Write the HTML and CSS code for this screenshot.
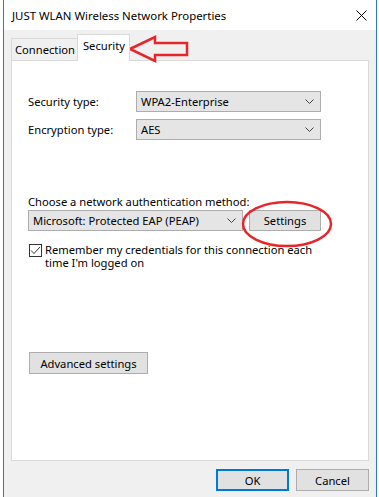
FILE: index.html
```html
<!DOCTYPE html>
<html lang="en">
<head>
  <meta charset="UTF-8">
  <title>JUST WLAN Wireless Network Properties</title>
  <link rel="stylesheet" href="styles.css">
</head>
<body>
  <div class="window">
    <div class="titlebar">
      <span class="title">JUST WLAN Wireless Network Properties</span>
      <svg class="close" width="11" height="11" viewBox="0 0 11 11"><path d="M0.5 0.5 L10.5 10.5 M10.5 0.5 L0.5 10.5" stroke="#000" stroke-width="1"/></svg>
    </div>
    <div class="content">
      <div class="tabs">
        <div class="tab">Connection</div>
        <div class="tab selected">Security</div>
      </div>
      <div class="panel">
        <div class="field">
          <span class="label">Security type:</span>
          <div class="combo wide"><span>WPA2-Enterprise</span><svg class="chev" width="9" height="5" viewBox="0 0 9 5"><path d="M0.5 0.5 L4.5 4.5 L8.5 0.5" fill="none" stroke="#444"/></svg></div>
        </div>
        <div class="field">
          <span class="label">Encryption type:</span>
          <div class="combo wide"><span>AES</span><svg class="chev" width="9" height="5" viewBox="0 0 9 5"><path d="M0.5 0.5 L4.5 4.5 L8.5 0.5" fill="none" stroke="#444"/></svg></div>
        </div>
        <p class="heading">Choose a network authentication method:</p>
        <div class="auth">
          <div class="combo method"><span>Microsoft: Protected EAP (PEAP)</span><svg class="chev" width="9" height="5" viewBox="0 0 9 5"><path d="M0.5 0.5 L4.5 4.5 L8.5 0.5" fill="none" stroke="#444"/></svg></div>
          <button class="btn settings">Settings</button>
        </div>
        <label class="check">
          <span class="box"><svg width="11" height="11" viewBox="0 0 11 11"><path d="M1 5.5 L4 8.5 L10 2" fill="none" stroke="#333" stroke-width="1"/></svg></span>
          <span class="check-text">Remember my credentials for this connection each time I'm logged on</span>
        </label>
        <button class="btn advanced">Advanced settings</button>
      </div>
      <div class="footer">
        <button class="btn default">OK</button>
        <button class="btn">Cancel</button>
      </div>
    </div>
    <!-- red annotations drawn over the dialog -->
    <svg class="arrow" width="64" height="30" viewBox="0 0 64 30"><path d="M3 15 L28 3 L28 9 L60 9 L60 21 L28 21 L28 27 Z" fill="none" stroke="#e8252b" stroke-width="2.5" stroke-linejoin="miter"/></svg>
    <svg class="ring" width="94" height="50" viewBox="0 0 94 50"><ellipse cx="47" cy="25" rx="44" ry="22" fill="none" stroke="#e8252b" stroke-width="2.5"/></svg>
  </div>
</body>
</html>
```
FILE: styles.css
```css
* { box-sizing: border-box; margin: 0; padding: 0; }
body { background: #fff; font-family: "Noto Sans", sans-serif; font-size: 11.2px; color: #000; }
.window { position: relative; width: 374px; height: 497px; margin-left: 3px; border-left: 1px solid #2b79c8; border-right: 1px solid #2b79c8; background: #f0f0f0; }
.titlebar { height: 30px; background: #fff; display: flex; align-items: center; justify-content: space-between; padding: 0 9px 0 8px; }
.title { font-size: 11.4px; }
.content { padding: 3px 7px 0; }
.tabs { display: flex; align-items: flex-end; height: 27px; }
.tab { height: 22px; padding: 0 2px 0 3px; border: 1px solid #d9d9d9; border-bottom: none; border-right: none; line-height: 21px; background: #f0f0f0; }
.tab.selected { position: relative; z-index: 1; height: 27px; margin-bottom: -1px; padding: 0 4px 0 5px; border-right: 1px solid #d9d9d9; background: #fff; line-height: 22px; }
.panel { height: 401px; border: 1px solid #d9d9d9; background: #fff; padding: 30px 16px 0; }
.field { display: flex; align-items: center; margin-bottom: 7px; }
.label { width: 108px; }
.combo { height: 21px; display: flex; align-items: center; justify-content: space-between; padding: 0 6px 0 4px; background: #e5e5e5; border: 1px solid #adadad; }
.combo.wide { width: 185px; }
.combo.method { width: 215px; }
.chev { flex: none; }
.heading { margin-top: 54px; line-height: 16px; }
.auth { display: flex; gap: 6px; }
.btn { font: inherit; color: #000; background: #e1e1e1; border: 1px solid #adadad; height: 22px; }
.settings { width: 72px; height: 21px; }
.check { display: flex; gap: 3px; margin: 12px 0 0 1px; line-height: 13px; }
.box { flex: none; width: 13px; height: 13px; border: 1px solid #333; background: #fff; display: flex; align-items: center; justify-content: center; margin-top: 1px; }
.check-text { width: 268px; }
.advanced { display: block; width: 119px; margin: 83px 0 0 1px; }
.footer { display: flex; justify-content: flex-end; gap: 7px; padding: 8px 0 0; }
.footer .btn { width: 73px; }
.btn.default { border: 2px solid #0078d7; }
.arrow { position: absolute; left: 123px; top: 34px; }
.ring { position: absolute; left: 236px; top: 199px; }
```
